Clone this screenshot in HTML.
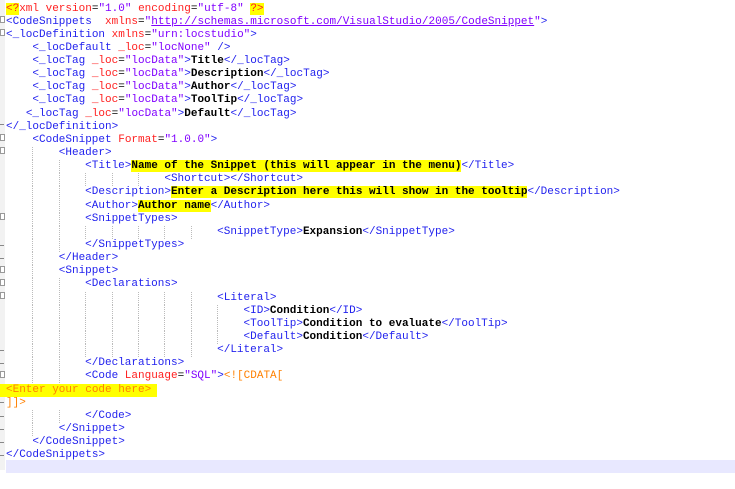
<!DOCTYPE html>
<html><head><style>
html,body{margin:0;padding:0;background:#fff;width:735px;height:489px;overflow:hidden}
#ed{position:absolute;left:6px;top:2.5px;font-family:"Liberation Mono",monospace;font-size:11px;}
.l{height:13.15px;line-height:13.15px;white-space:pre;}
.t{color:#2222ee}.a{color:#ff2020}.v{color:#8000ff}.x{color:#000;font-weight:bold}.c{color:#ff8000}
.y{background:#ffff00}
.u{text-decoration:underline}
.g{display:inline-block;width:26.4px;height:13.15px;vertical-align:top;background:repeating-linear-gradient(to bottom,#bbb 0 1px,transparent 1px 2px) left top/1px 100% no-repeat}
.s{display:inline-block;width:26.4px;height:13.15px;vertical-align:top}
#mg{position:absolute;left:0;top:0;width:5px;height:470px;background:#f2f2f2}
.fb{position:absolute;left:0;width:5px;height:7px;border:1px solid #999;box-sizing:border-box;background:#fff}
.fe{position:absolute;left:0;width:4px;height:1px;background:#888}
#cur{position:absolute;left:6px;top:460.4px;width:729px;height:13px;background:#e8e8ff}
</style></head><body>
<div id="mg"></div>
<div class="fb" style="top:16px"></div>
<div class="fb" style="top:29px"></div>
<div class="fe" style="top:124px"></div>
<div class="fb" style="top:134px"></div>
<div class="fb" style="top:147px"></div>
<div class="fb" style="top:213px"></div>
<div class="fe" style="top:245px"></div>
<div class="fe" style="top:258px"></div>
<div class="fb" style="top:266px"></div>
<div class="fb" style="top:279px"></div>
<div class="fb" style="top:292px"></div>
<div class="fe" style="top:350px"></div>
<div class="fe" style="top:363px"></div>
<div class="fb" style="top:371px"></div>
<div class="fe" style="top:402px"></div>
<div class="fe" style="top:416px"></div>
<div class="fe" style="top:429px"></div>
<div class="fe" style="top:442px"></div>
<div class="fe" style="top:455px"></div>
<div id="cur"></div>
<div id="ed">
<div class="l"><span class="a y">&lt;?</span><span class="a">xml version</span>=<span class="v">"1.0"</span> <span class="a">encoding</span>=<span class="v">"utf-8"</span> <span class="a y">?&gt;</span></div>
<div class="l"><span class="t">&lt;CodeSnippets</span>  <span class="a">xmlns</span>=<span class="v">"<span class="u">http://schemas.microsoft.com/VisualStudio/2005/CodeSnippet</span>"</span><span class="t">&gt;</span></div>
<div class="l"><span class="t">&lt;_locDefinition</span> <span class="a">xmlns</span>=<span class="v">"urn:locstudio"</span><span class="t">&gt;</span></div>
<div class="l"><span class="s"></span><span class="t">&lt;_locDefault</span> <span class="a">_loc</span>=<span class="v">"locNone"</span> <span class="t">/&gt;</span></div>
<div class="l"><span class="s"></span><span class="t">&lt;_locTag</span> <span class="a">_loc</span>=<span class="v">"locData"</span><span class="t">&gt;</span><span class="x">Title</span><span class="t">&lt;/_locTag&gt;</span></div>
<div class="l"><span class="s"></span><span class="t">&lt;_locTag</span> <span class="a">_loc</span>=<span class="v">"locData"</span><span class="t">&gt;</span><span class="x">Description</span><span class="t">&lt;/_locTag&gt;</span></div>
<div class="l"><span class="s"></span><span class="t">&lt;_locTag</span> <span class="a">_loc</span>=<span class="v">"locData"</span><span class="t">&gt;</span><span class="x">Author</span><span class="t">&lt;/_locTag&gt;</span></div>
<div class="l"><span class="s"></span><span class="t">&lt;_locTag</span> <span class="a">_loc</span>=<span class="v">"locData"</span><span class="t">&gt;</span><span class="x">ToolTip</span><span class="t">&lt;/_locTag&gt;</span></div>
<div class="l">   <span class="t">&lt;_locTag</span> <span class="a">_loc</span>=<span class="v">"locData"</span><span class="t">&gt;</span><span class="x">Default</span><span class="t">&lt;/_locTag&gt;</span></div>
<div class="l"><span class="t">&lt;/_locDefinition&gt;</span></div>
<div class="l"><span class="s"></span><span class="t">&lt;CodeSnippet</span> <span class="a">Format</span>=<span class="v">"1.0.0"</span><span class="t">&gt;</span></div>
<div class="l"><span class="s"></span><span class="g"></span><span class="t">&lt;Header&gt;</span></div>
<div class="l"><span class="s"></span><span class="g"></span><span class="g"></span><span class="t">&lt;Title&gt;</span><span class="x y">Name of the Snippet (this will appear in the menu)</span><span class="t">&lt;/Title&gt;</span></div>
<div class="l"><span class="s"></span><span class="g"></span><span class="g"></span><span class="g"></span><span class="g"></span><span class="g"></span><span class="t">&lt;Shortcut&gt;&lt;/Shortcut&gt;</span></div>
<div class="l"><span class="s"></span><span class="g"></span><span class="g"></span><span class="t">&lt;Description&gt;</span><span class="x y">Enter a Description here this will show in the tooltip</span><span class="t">&lt;/Description&gt;</span></div>
<div class="l"><span class="s"></span><span class="g"></span><span class="g"></span><span class="t">&lt;Author&gt;</span><span class="x y">Author name</span><span class="t">&lt;/Author&gt;</span></div>
<div class="l"><span class="s"></span><span class="g"></span><span class="g"></span><span class="t">&lt;SnippetTypes&gt;</span></div>
<div class="l"><span class="s"></span><span class="g"></span><span class="g"></span><span class="g"></span><span class="g"></span><span class="g"></span><span class="g"></span><span class="g"></span><span class="t">&lt;SnippetType&gt;</span><span class="x">Expansion</span><span class="t">&lt;/SnippetType&gt;</span></div>
<div class="l"><span class="s"></span><span class="g"></span><span class="g"></span><span class="t">&lt;/SnippetTypes&gt;</span></div>
<div class="l"><span class="s"></span><span class="g"></span><span class="t">&lt;/Header&gt;</span></div>
<div class="l"><span class="s"></span><span class="g"></span><span class="t">&lt;Snippet&gt;</span></div>
<div class="l"><span class="s"></span><span class="g"></span><span class="g"></span><span class="t">&lt;Declarations&gt;</span></div>
<div class="l"><span class="s"></span><span class="g"></span><span class="g"></span><span class="g"></span><span class="g"></span><span class="g"></span><span class="g"></span><span class="g"></span><span class="t">&lt;Literal&gt;</span></div>
<div class="l"><span class="s"></span><span class="g"></span><span class="g"></span><span class="g"></span><span class="g"></span><span class="g"></span><span class="g"></span><span class="g"></span><span class="g"></span><span class="t">&lt;ID&gt;</span><span class="x">Condition</span><span class="t">&lt;/ID&gt;</span></div>
<div class="l"><span class="s"></span><span class="g"></span><span class="g"></span><span class="g"></span><span class="g"></span><span class="g"></span><span class="g"></span><span class="g"></span><span class="g"></span><span class="t">&lt;ToolTip&gt;</span><span class="x">Condition to evaluate</span><span class="t">&lt;/ToolTip&gt;</span></div>
<div class="l"><span class="s"></span><span class="g"></span><span class="g"></span><span class="g"></span><span class="g"></span><span class="g"></span><span class="g"></span><span class="g"></span><span class="g"></span><span class="t">&lt;Default&gt;</span><span class="x">Condition</span><span class="t">&lt;/Default&gt;</span></div>
<div class="l"><span class="s"></span><span class="g"></span><span class="g"></span><span class="g"></span><span class="g"></span><span class="g"></span><span class="g"></span><span class="g"></span><span class="t">&lt;/Literal&gt;</span></div>
<div class="l"><span class="s"></span><span class="g"></span><span class="g"></span><span class="t">&lt;/Declarations&gt;</span></div>
<div class="l"><span class="s"></span><span class="g"></span><span class="g"></span><span class="t">&lt;Code</span> <span class="a">Language</span>=<span class="v">"SQL"</span><span class="t">&gt;</span><span class="c">&lt;![CDATA[</span></div>
<div class="l" style="margin-left:-6px;padding-left:6px;background:#ffff00;width:151px"><span class="c">&lt;Enter your code here&gt;</span></div>
<div class="l"><span class="c">]]&gt;</span></div>
<div class="l"><span class="s"></span><span class="g"></span><span class="g"></span><span class="t">&lt;/Code&gt;</span></div>
<div class="l"><span class="s"></span><span class="g"></span><span class="t">&lt;/Snippet&gt;</span></div>
<div class="l"><span class="s"></span><span class="t">&lt;/CodeSnippet&gt;</span></div>
<div class="l"><span class="t">&lt;/CodeSnippets&gt;</span></div>
</div>
</body></html>
